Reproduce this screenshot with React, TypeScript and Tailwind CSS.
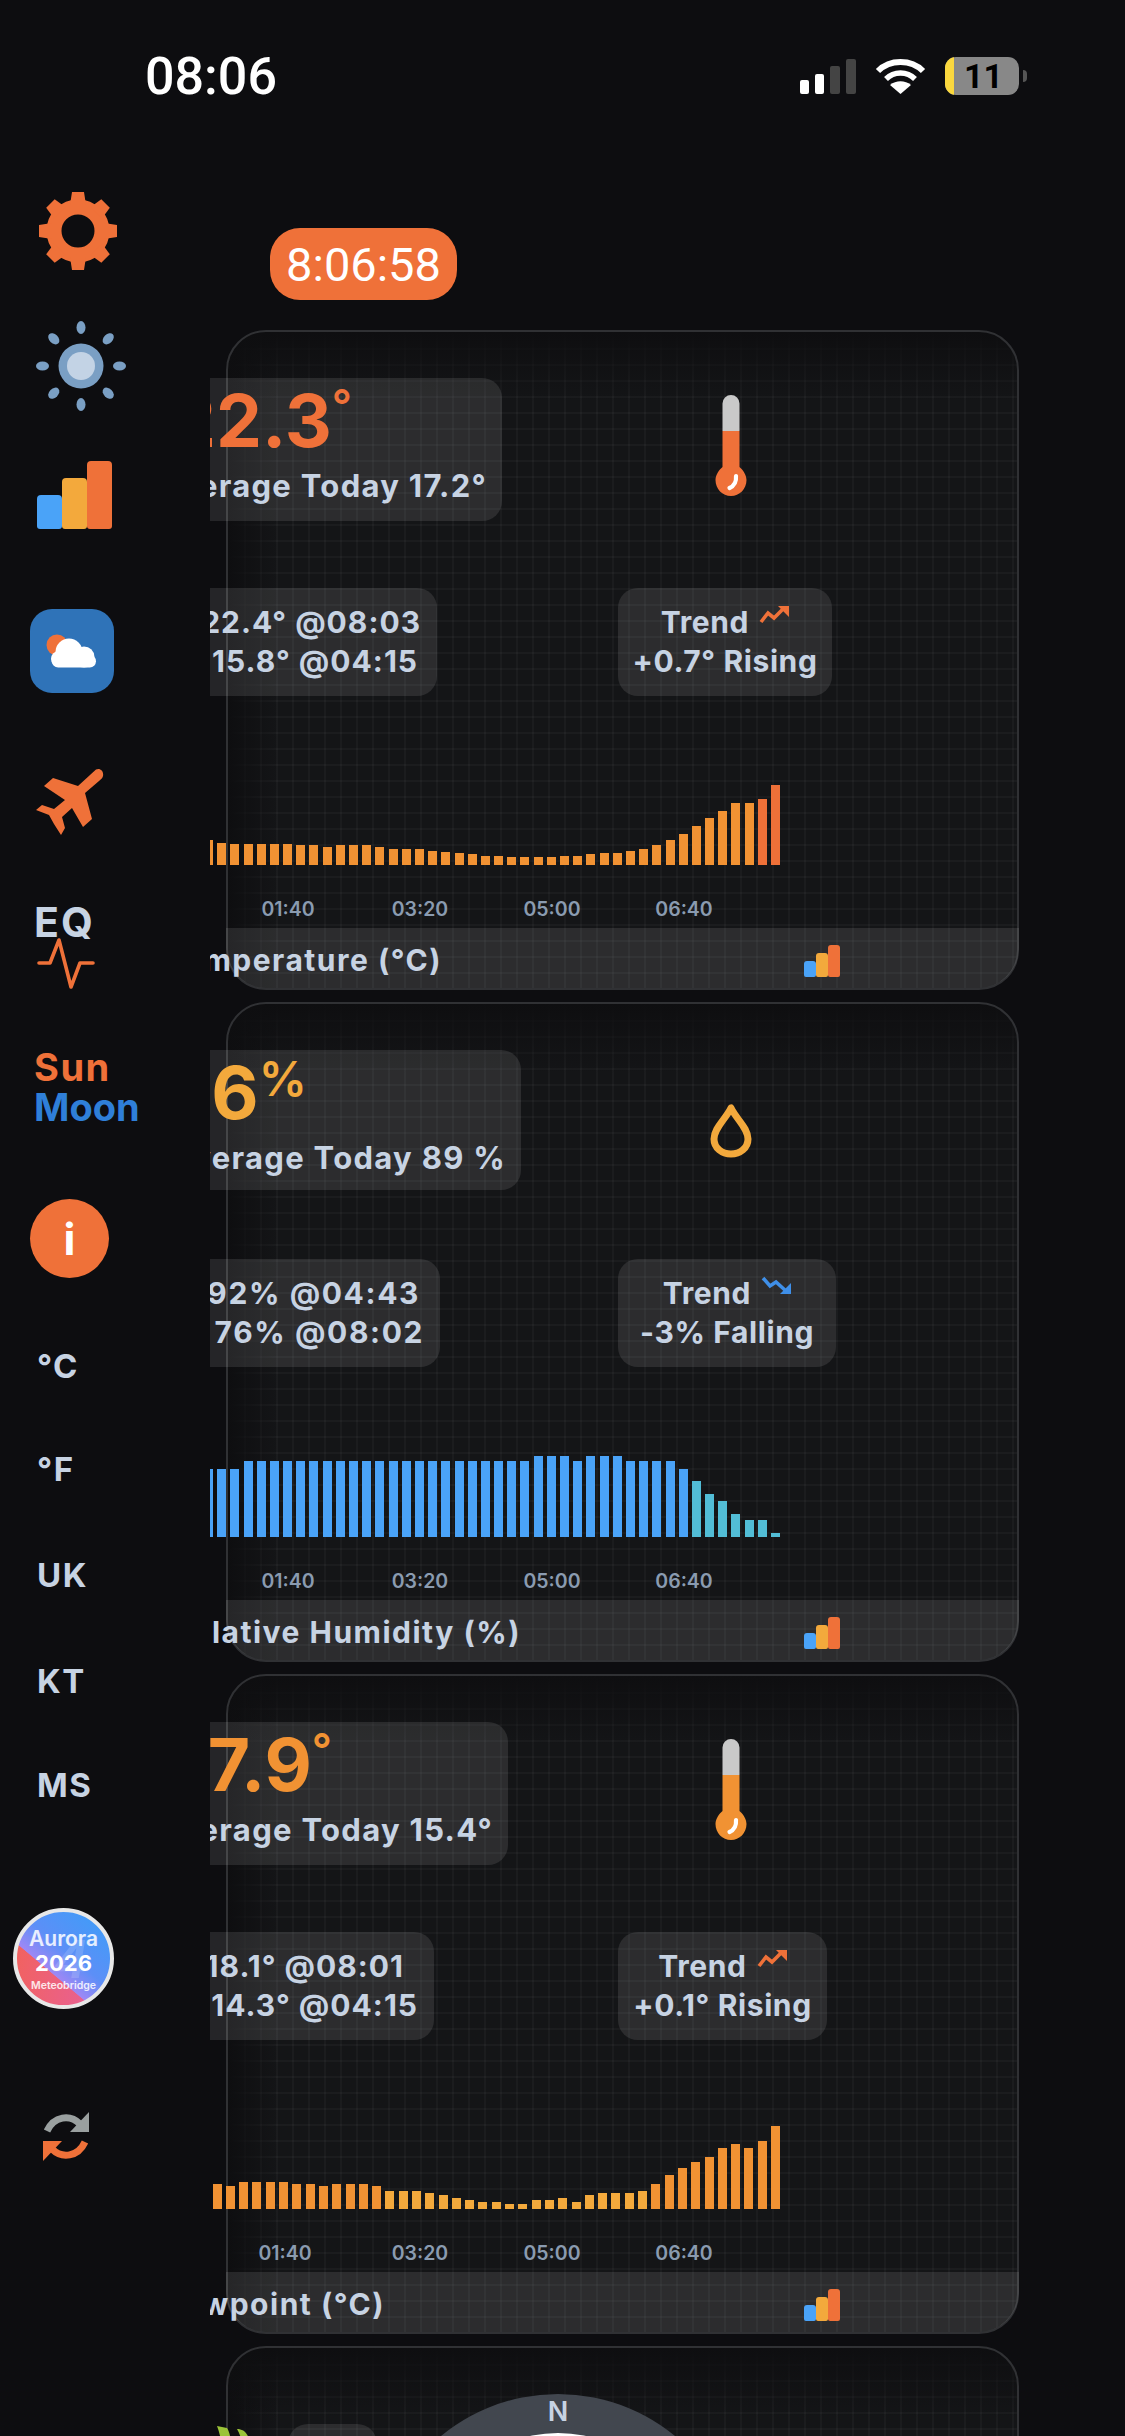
import { ReactNode } from "react";

const ORANGE = "bg-[#f19233]";
const RED = "bg-[#ee7038]";
const AMBER = "bg-[#f3a93c]";
const BLUE = "bg-[#4aa3f8]";
const TEAL = "bg-[#52bdd6]";

const tempBars = [
  25.3, 22.7, 21.3, 21.3, 21.3, 21.3, 21.3, 20.3, 20.3, 18.7, 20.3, 20.3, 20.3, 18.7, 16.3, 16.3, 16.3, 14.7, 13.3, 12.3,
  11, 9.7, 9.7, 8.3, 8.3, 8.3, 8.3, 9.7, 9.7, 11, 12.3, 12.3, 14.7, 16.3, 20.3, 25.3, 31.7, 39.3, 47, 54.7, 62.3, 62.3,
  66.3, 80.3,
];
const humidityBars = [
  68.6, 68.6, 68.6, 75.8, 75.8, 75.8, 75.8, 75.8, 75.8, 75.8, 75.8, 75.8, 75.8, 75.8, 75.8, 75.8, 75.8, 75.8, 75.8, 75.8,
  75.8, 75.8, 75.8, 75.8, 75.8, 81.7, 81.7, 81.7, 75.8, 81.7, 81.7, 81.7, 75.8, 75.8, 75.8, 75.8, 68.6, 56, 43.4, 36.6,
  23.6, 17.3, 17.3, 4.2,
];
const dewBars = [
  25.3, 23, 27.7, 27.7, 27.7, 27.7, 25.3, 25.3, 23, 25.3, 25.3, 25.3, 23, 18.7, 18.7, 18.7, 16.3, 14, 11.7, 9.7, 7.3, 7.3,
  5, 5, 9.7, 9.7, 11.7, 7.3, 14, 16.3, 16.3, 16.3, 18.7, 25.3, 34.3, 41, 47.7, 52.3, 61.3, 65.7, 61.3, 68, 83.7,
];

const Gear = () => (
  <svg width="78" height="78" viewBox="-39 -39 78 78" className="text-[#ef7139]">
    <circle r="24" fill="none" stroke="currentColor" strokeWidth="15" />
    {[0, 45, 90, 135, 180, 225, 270, 315].map((a) => (
      <path key={a} d="M-8 -26 L-6 -39 H6 L8 -26 Z" fill="currentColor" transform={`rotate(${a})`} />
    ))}
  </svg>
);

const Sun = () => (
  <svg width="90" height="90" viewBox="-45 -45 90 90">
    {[0, 45, 90, 135, 180, 225, 270, 315].map((a) => (
      <ellipse key={a} cx="0" cy="-38.5" rx="4.5" ry="6.5" fill="#7a9fc4" transform={`rotate(${a})`} />
    ))}
    <circle r="22.5" fill="#7a9fc4" />
    <circle r="14" fill="#c3d3e5" />
  </svg>
);

const BarsIcon = ({ small }: { small?: boolean }) =>
  small ? (
    <div className="flex items-end">
      <div className="h-[16px] w-[12px] rounded-t-[3px] rounded-b-[2px] bg-[#4aa3f8]" />
      <div className="h-[24px] w-[12px] rounded-t-[3px] rounded-b-[2px] bg-[#f3a93c]" />
      <div className="h-[32px] w-[12px] rounded-t-[3px] rounded-b-[2px] bg-[#ef7139]" />
    </div>
  ) : (
    <div className="flex items-end">
      <div className="h-[34px] w-[25px] rounded-t-[4px] rounded-b-[3px] bg-[#4aa3f8]" />
      <div className="h-[51px] w-[25px] rounded-t-[4px] rounded-b-[3px] bg-[#f3a93c]" />
      <div className="h-[68px] w-[25px] rounded-t-[4px] rounded-b-[3px] bg-[#ef7139]" />
    </div>
  );

const WeatherTile = () => (
  <div className="flex h-[84px] w-[84px] items-center justify-center rounded-[22px] bg-[#2f73b8]">
    <svg width="84" height="84" viewBox="0 0 84 84">
      <circle cx="27" cy="36" r="10.5" fill="#ef7139" />
      <circle cx="39" cy="43" r="13.5" fill="#fff" />
      <circle cx="54" cy="48" r="10.5" fill="#fff" />
      <circle cx="29" cy="50" r="8" fill="#fff" />
      <rect x="22" y="46" width="44" height="12.5" rx="6.2" fill="#fff" />
    </svg>
  </div>
);

const Plane = () => (
  <svg width="68" height="67" viewBox="0 0 68 67">
    <path
      d="M60 1.5 C64 -0.5 68 3 67 8 C66.5 10 65 11.5 63 13 L49 25 L56 51 L47 59 L36 40 L26 49 L29 60 L25 67 L18 56 L13 47 L0 42 L6 37 L18 41 L29 32 L8 18 L17 10 L42 18 Z"
      fill="#ef7139"
    />
  </svg>
);

const Pulse = () => (
  <svg width="60" height="52" viewBox="0 0 60 52" fill="none">
    <path
      d="M3 25 H14 L23 2 L35 49 L44 25 H57"
      stroke="#ef7139"
      strokeWidth="3.6"
      strokeLinecap="round"
      strokeLinejoin="round"
    />
  </svg>
);

const Refresh = () => (
  <svg width="48" height="51" viewBox="0 0 48 51" fill="none">
    <path d="M5 20 C12 5 28 3 38 13" stroke="#9aa0a0" strokeWidth="7" />
    <path d="M47 1 V21 H28 Z" fill="#9aa0a0" />
    <g transform="rotate(180 24 25.5)">
      <path d="M5 20 C12 5 28 3 38 13" stroke="#ef7139" strokeWidth="7" />
      <path d="M47 1 V21 H28 Z" fill="#ef7139" />
    </g>
  </svg>
);

const Badge = () => (
  <div className="relative flex h-[101px] w-[101px] flex-col items-center overflow-hidden rounded-full border-[4px] border-[#e8e8e8] bg-[linear-gradient(220deg,#3a9ff8_0%,#5c8ff7_45%,#9e88f5_64%,transparent_64.5%),linear-gradient(100deg,#f2625c,#e660a0)] font-semibold text-white">
    <span className="absolute top-[22px] left-[36px] text-[52px] leading-none font-bold text-white/15 italic">4</span>
    <span className="relative mt-[16px] text-[21px] leading-[22px] text-white/85">Aurora</span>
    <span className="relative text-[22px] leading-[26px] font-bold">2026</span>
    <span className="relative mt-[4px] text-[10.5px] leading-[12px] text-white/85">Meteobridge</span>
  </div>
);

const UnitLabel = ({ children, className }: { children: ReactNode; className: string }) => (
  <div className={`ml-[37px] h-[33px] text-[33px] leading-none font-bold tracking-[1.5px] text-[#c7d3e3] ${className}`}>
    {children}
  </div>
);

const Sidebar = () => (
  <div className="flex w-[210px] shrink-0 flex-col">
    <div className="mt-[40px] ml-[39px] w-fit">
      <Gear />
    </div>
    <div className="mt-[51px] ml-[36px] w-fit">
      <Sun />
    </div>
    <div className="mt-[50px] ml-[37px] w-fit">
      <BarsIcon />
    </div>
    <div className="mt-[80px] ml-[30px] w-fit">
      <WeatherTile />
    </div>
    <div className="mt-[75px] ml-[36px] h-[67px] w-fit">
      <Plane />
    </div>
    <div className="mt-[67px] ml-[34px] h-[41px] text-[41px] leading-none font-bold tracking-[2px] text-[#c7d3e3]">EQ</div>
    <div className="-mt-[5px] ml-[36px] w-fit">
      <Pulse />
    </div>
    <div className="mt-[58px] ml-[34px] h-[38px] text-[38px] leading-none font-bold tracking-[1.5px] text-[#ef7139]">Sun</div>
    <div className="mt-[2px] ml-[34px] h-[38px] text-[38px] leading-none font-bold text-[#2f7fd8]">Moon</div>
    <div className="mt-[73px] ml-[30px] flex h-[79px] w-[79px] items-center justify-center rounded-full bg-[#ef7139] text-[44px] leading-none font-bold text-white">
      i
    </div>
    <UnitLabel className="mt-[71.5px]">°C</UnitLabel>
    <UnitLabel className="mt-[70px]">°F</UnitLabel>
    <UnitLabel className="mt-[73px]">UK</UnitLabel>
    <UnitLabel className="mt-[73px]">KT</UnitLabel>
    <UnitLabel className="mt-[71px]">MS</UnitLabel>
    <div className="mt-[106px] ml-[13px] w-fit">
      <Badge />
    </div>
    <div className="mt-[102px] ml-[42px] w-fit">
      <Refresh />
    </div>
  </div>
);

const Thermometer = ({ fill }: { fill: string }) => (
  <svg width="32" height="101" viewBox="0 0 32 101">
    <path d="M7.5 36 V8.5 a8.5 8.5 0 0 1 17 0 V36 Z" fill="#c9c9c9" />
    <path
      d="M7.5 36 H24.5 V72 C28 75 31.5 80 31.5 85 C31.5 94 24.5 101 16 101 C7.5 101 0.5 94 0.5 85 C0.5 80 4 75 7.5 72 Z"
      fill={fill}
    />
    <path d="M21 81 C21.5 87 19 91 14.5 93" stroke="#fff" strokeWidth="4.2" strokeLinecap="round" fill="none" />
  </svg>
);

const Drop = () => (
  <svg width="42" height="54" viewBox="0 0 42 54" fill="none">
    <path
      d="M21 4 C15 16 4 24 4 35 C4 44 12 50 21 50 C30 50 38 44 38 35 C38 24 27 16 21 4 Z"
      stroke="#f3a93c"
      strokeWidth="7"
      strokeLinejoin="round"
    />
  </svg>
);

const TrendUp = () => (
  <svg width="30" height="19" viewBox="0 0 30 19" fill="none">
    <path d="M2 17 L9 8 L15 13 L25 3" stroke="#ef7139" strokeWidth="3.6" />
    <path d="M19 1 H30 V12 Z" fill="#ef7139" />
  </svg>
);

const TrendDown = () => (
  <svg width="30" height="19" viewBox="0 0 30 19" fill="none">
    <path d="M2 2 L9 10 L15 6 L25 15" stroke="#3f8fe8" strokeWidth="3.6" />
    <path d="M19 18 H30 V7 Z" fill="#3f8fe8" />
  </svg>
);

type CardData = {
  value: string;
  sup: string;
  supClass: string;
  valueColor: string;
  valuePr: string;
  avg: string;
  panelW: string;
  panelH: string;
  icon: ReactNode;
  iconClass: string;
  high: string;
  low: string;
  highPr: string;
  lowPr: string;
  rangeW: string;
  rangeTracking: string;
  trendW: string;
  trendIcon: ReactNode;
  trendText: string;
  bars: number[];
  barGap: string;
  barColor: (i: number) => string;
  title: string;
  titleW: string;
  iconMl: string;
  firstLabel: string;
};

const cards: CardData[] = [
  {
    value: "22.3",
    sup: "°",
    supClass: "text-[44px] -mt-[16px]",
    valueColor: "text-[#ef7139]",
    valuePr: "pr-[150px]",
    avg: "Average Today 17.2°",
    panelW: "w-[292px]",
    panelH: "h-[143px]",
    icon: <Thermometer fill="#ef7139" />,
    iconClass: "pb-[8px]",
    high: "22.4° @08:03",
    low: "15.8° @04:15",
    highPr: "pr-[16px]",
    lowPr: "pr-[19px]",
    rangeW: "w-[227px]",
    rangeTracking: "tracking-[1px]",
    trendW: "w-[214px]",
    trendIcon: <TrendUp />,
    trendText: "+0.7° Rising",
    bars: tempBars,
    barGap: "gap-[4.2px]",
    barColor: (i) => (i >= 42 ? RED : ORANGE),
    title: "Temperature (°C)",
    titleW: "w-[232px]",
    iconMl: "ml-[362px]",
    firstLabel: "",
  },
  {
    value: "86",
    sup: "%",
    supClass: "text-[48px] -mt-[14px]",
    valueColor: "text-[#f3a93c]",
    valuePr: "pr-[214px]",
    avg: "Average Today 89 %",
    panelW: "w-[311px]",
    panelH: "h-[140px]",
    icon: <Drop />,
    iconClass: "pt-[22px]",
    high: "92% @04:43",
    low: "76% @08:02",
    highPr: "pr-[20px]",
    lowPr: "pr-[16px]",
    rangeW: "w-[230px]",
    rangeTracking: "tracking-[1.6px]",
    trendW: "w-[218px]",
    trendIcon: <TrendDown />,
    trendText: "-3% Falling",
    bars: humidityBars,
    barGap: "gap-[4.2px]",
    barColor: (i) => (i >= 37 ? TEAL : BLUE),
    title: "Relative Humidity (%)",
    titleW: "w-[311px]",
    iconMl: "ml-[283px]",
    firstLabel: "",
  },
  {
    value: "17.9",
    sup: "°",
    supClass: "text-[44px] -mt-[16px]",
    valueColor: "text-[#f19233]",
    valuePr: "pr-[176px]",
    avg: "Average Today 15.4°",
    panelW: "w-[298px]",
    panelH: "h-[143px]",
    icon: <Thermometer fill="#f19233" />,
    iconClass: "pb-[8px]",
    high: "18.1° @08:01",
    low: "14.3° @04:15",
    highPr: "pr-[30px]",
    lowPr: "pr-[16px]",
    rangeW: "w-[224px]",
    rangeTracking: "tracking-[1px]",
    trendW: "w-[209px]",
    trendIcon: <TrendUp />,
    trendText: "+0.1° Rising",
    bars: dewBars,
    barGap: "gap-[4.3px]",
    barColor: (i) => (i >= 13 && i <= 32 ? AMBER : ORANGE),
    title: "Dewpoint (°C)",
    titleW: "w-[175px]",
    iconMl: "ml-[419px]",
    firstLabel: "-translate-x-[3px]",
  },
];

const CARD_CLASS =
  "w-[793px] rounded-[40px] border-2 border-[#303134] bg-[#141517] bg-[linear-gradient(180deg,#0e0e10,transparent_70px),linear-gradient(90deg,#0e0e10,transparent_50px),linear-gradient(rgba(255,255,255,0.03)_2px,transparent_2px),linear-gradient(90deg,rgba(255,255,255,0.03)_2px,transparent_2px)] bg-[size:100%_100%,100%_100%,16px_16px,16px_16px]";

const StatCard = ({ card }: { card: CardData }) => (
  <div className={`mb-[12px] flex h-[660px] shrink-0 flex-col ${CARD_CLASS}`}>
    <div className="-ml-[18px] flex h-[189px] items-start pt-[46px]">
      <div className="w-[408px]">
        <div className={`flex flex-col rounded-r-[20px] bg-white/10 ${card.panelW} ${card.panelH}`}>
          <div
            className={`flex h-[88px] items-start justify-end pt-[8px] text-[73px] leading-[70px] font-bold whitespace-nowrap ${card.valueColor} ${card.valuePr}`}
          >
            <span>{card.value}</span>
            <span className={`leading-[70px] font-semibold ${card.supClass}`}>{card.sup}</span>
          </div>
          <div className="flex justify-end pr-[15px] text-[31px] leading-[40px] font-bold tracking-[1.3px] whitespace-nowrap text-[#c7d3e3]">
            {card.avg}
          </div>
        </div>
      </div>
      <div className={`flex w-[226px] items-center justify-center ${card.panelH} ${card.iconClass}`}>{card.icon}</div>
    </div>
    <div className="-ml-[18px] mt-[67px] flex h-[108px]">
      <div className="w-[408px]">
        <div
          className={`flex h-[108px] flex-col justify-center rounded-r-[20px] bg-white/10 text-[30px] leading-[39px] font-bold whitespace-nowrap text-[#c7d3e3] ${card.rangeW} ${card.rangeTracking}`}
        >
          <div className={`flex justify-end ${card.highPr}`}>{card.high}</div>
          <div className={`flex justify-end ${card.lowPr}`}>{card.low}</div>
        </div>
      </div>
      <div
        className={`flex h-[108px] flex-col items-center justify-center rounded-[20px] bg-white/10 text-[30px] leading-[39px] font-bold tracking-[0.6px] whitespace-nowrap text-[#c7d3e3] ${card.trendW}`}
      >
        <div className="flex items-start gap-[10px]">
          <span>Trend</span>
          <span className="mt-[2px]">{card.trendIcon}</span>
        </div>
        <div>{card.trendText}</div>
      </div>
    </div>
    <div className={`-ml-[18px] flex h-[171px] w-[570px] items-end justify-end overflow-hidden ${card.barGap}`}>
      {card.bars.map((h, i) => (
        <div key={i} className={`w-[9px] shrink-0 ${card.barColor(i)}`} style={{ height: h }} />
      ))}
    </div>
    <div className="-ml-[6px] flex h-[63px] pt-[32px] text-[19.5px] leading-[24px] font-semibold text-[#8a9bb0]">
      <span className={`w-[132px] text-center ${card.firstLabel}`}>01:40</span>
      <span className="w-[132px] text-center">03:20</span>
      <span className="w-[132px] text-center">05:00</span>
      <span className="w-[132px] text-center">06:40</span>
    </div>
    <div className="-mx-[2px] flex h-[60px] shrink-0 items-center rounded-b-[40px] bg-white/10">
      <div
        className={`-ml-[16px] flex shrink-0 justify-end pt-[5px] text-[30px] font-bold tracking-[1.5px] whitespace-nowrap text-[#c7d3e3] ${card.titleW}`}
      >
        {card.title}
      </div>
      <div className={`pt-[6px] ${card.iconMl}`}>
        <BarsIcon small />
      </div>
    </div>
  </div>
);

const WindCard = () => (
  <div className={`h-[660px] shrink-0 ${CARD_CLASS}`}>
    <div className="-ml-[18px] flex items-start pt-[46px]">
      <svg width="36" height="40" viewBox="0 0 36 40" className="mt-[32px] ml-[7px]">
        <path d="M0 0 L10 2 C14 8 15 20 14 40 L6 40 C6 24 4 10 0 0 Z" fill="#9bc338" />
        <path d="M20 3 C30 3 35 12 36 40 L28 40 C28 24 25 12 20 3 Z" fill="#9bc338" />
      </svg>
      <div className="mt-[30px] ml-[35px] h-[60px] w-[89px] rounded-t-[20px] bg-white/10" />
      <div className="-ml-[3px] flex h-[368px] w-[368px] shrink-0 flex-col items-center rounded-full bg-[#42474f]">
        <div className="h-[39px] text-[27px] leading-[36px] font-semibold text-[#c7d3e3]">N</div>
        <div className="h-[264px] w-[264px] rounded-full bg-[linear-gradient(180deg,#ffffff,#9fb8d6)]" />
      </div>
    </div>
  </div>
);

const StatusBar = () => (
  <div className="flex h-[152px] items-center">
    <div className="ml-[145px] pt-[2px] font-[Roboto,sans-serif] text-[52px] leading-none font-medium text-white">08:06</div>
    <div className="mr-[98px] ml-auto flex items-center">
      <div className="flex h-[36px] items-end gap-[6px]">
        <div className="h-[14px] w-[9px] rounded-[2px] bg-white" />
        <div className="h-[20px] w-[9px] rounded-[2px] bg-white" />
        <div className="h-[28px] w-[10px] rounded-[2px] bg-[#444]" />
        <div className="h-[35px] w-[10px] rounded-[2px] bg-[#444]" />
      </div>
      <svg width="51" height="36" viewBox="0 0 51 36" fill="none" className="ml-[19px]">
        <path d="M3 13 C15 1 36 1 48 13" stroke="#fff" strokeWidth="6" />
        <path d="M11 21 C19 13 32 13 40 21" stroke="#fff" strokeWidth="5.5" />
        <path d="M25.5 36 L15 27 C21 22 30 22 36 27 Z" fill="#fff" />
      </svg>
      <div className="ml-[19px] flex h-[38px] w-[74px] items-center overflow-hidden rounded-[11px] bg-[#888] font-[Roboto,sans-serif] text-[34px] leading-none font-bold text-black">
        <div className="h-full w-[9px] bg-[#fbd83e]" />
        <span className="ml-[10px]">11</span>
      </div>
      <div className="ml-[4px] h-[12px] w-[4px] rounded-r-[4px] bg-[#555]" />
    </div>
  </div>
);

export default function App() {
  return (
    <div className="h-[2436px] w-[1125px] overflow-hidden bg-[#0d0d10] font-[Inter,sans-serif]">
      <StatusBar />
      <div className="flex">
        <Sidebar />
        <div className="flex min-w-0 flex-1 flex-col overflow-hidden pt-[76px] pl-[16px]">
          <div className="ml-[44px] flex h-[72px] w-[187px] items-center justify-center rounded-[30px] bg-[#ef7139] font-[Roboto,sans-serif] text-[47px] leading-none text-white">
            8:06:58
          </div>
          <div className="mt-[30px] flex flex-col">
            {cards.map((c) => (
              <StatCard key={c.title} card={c} />
            ))}
            <WindCard />
          </div>
        </div>
      </div>
    </div>
  );
}
